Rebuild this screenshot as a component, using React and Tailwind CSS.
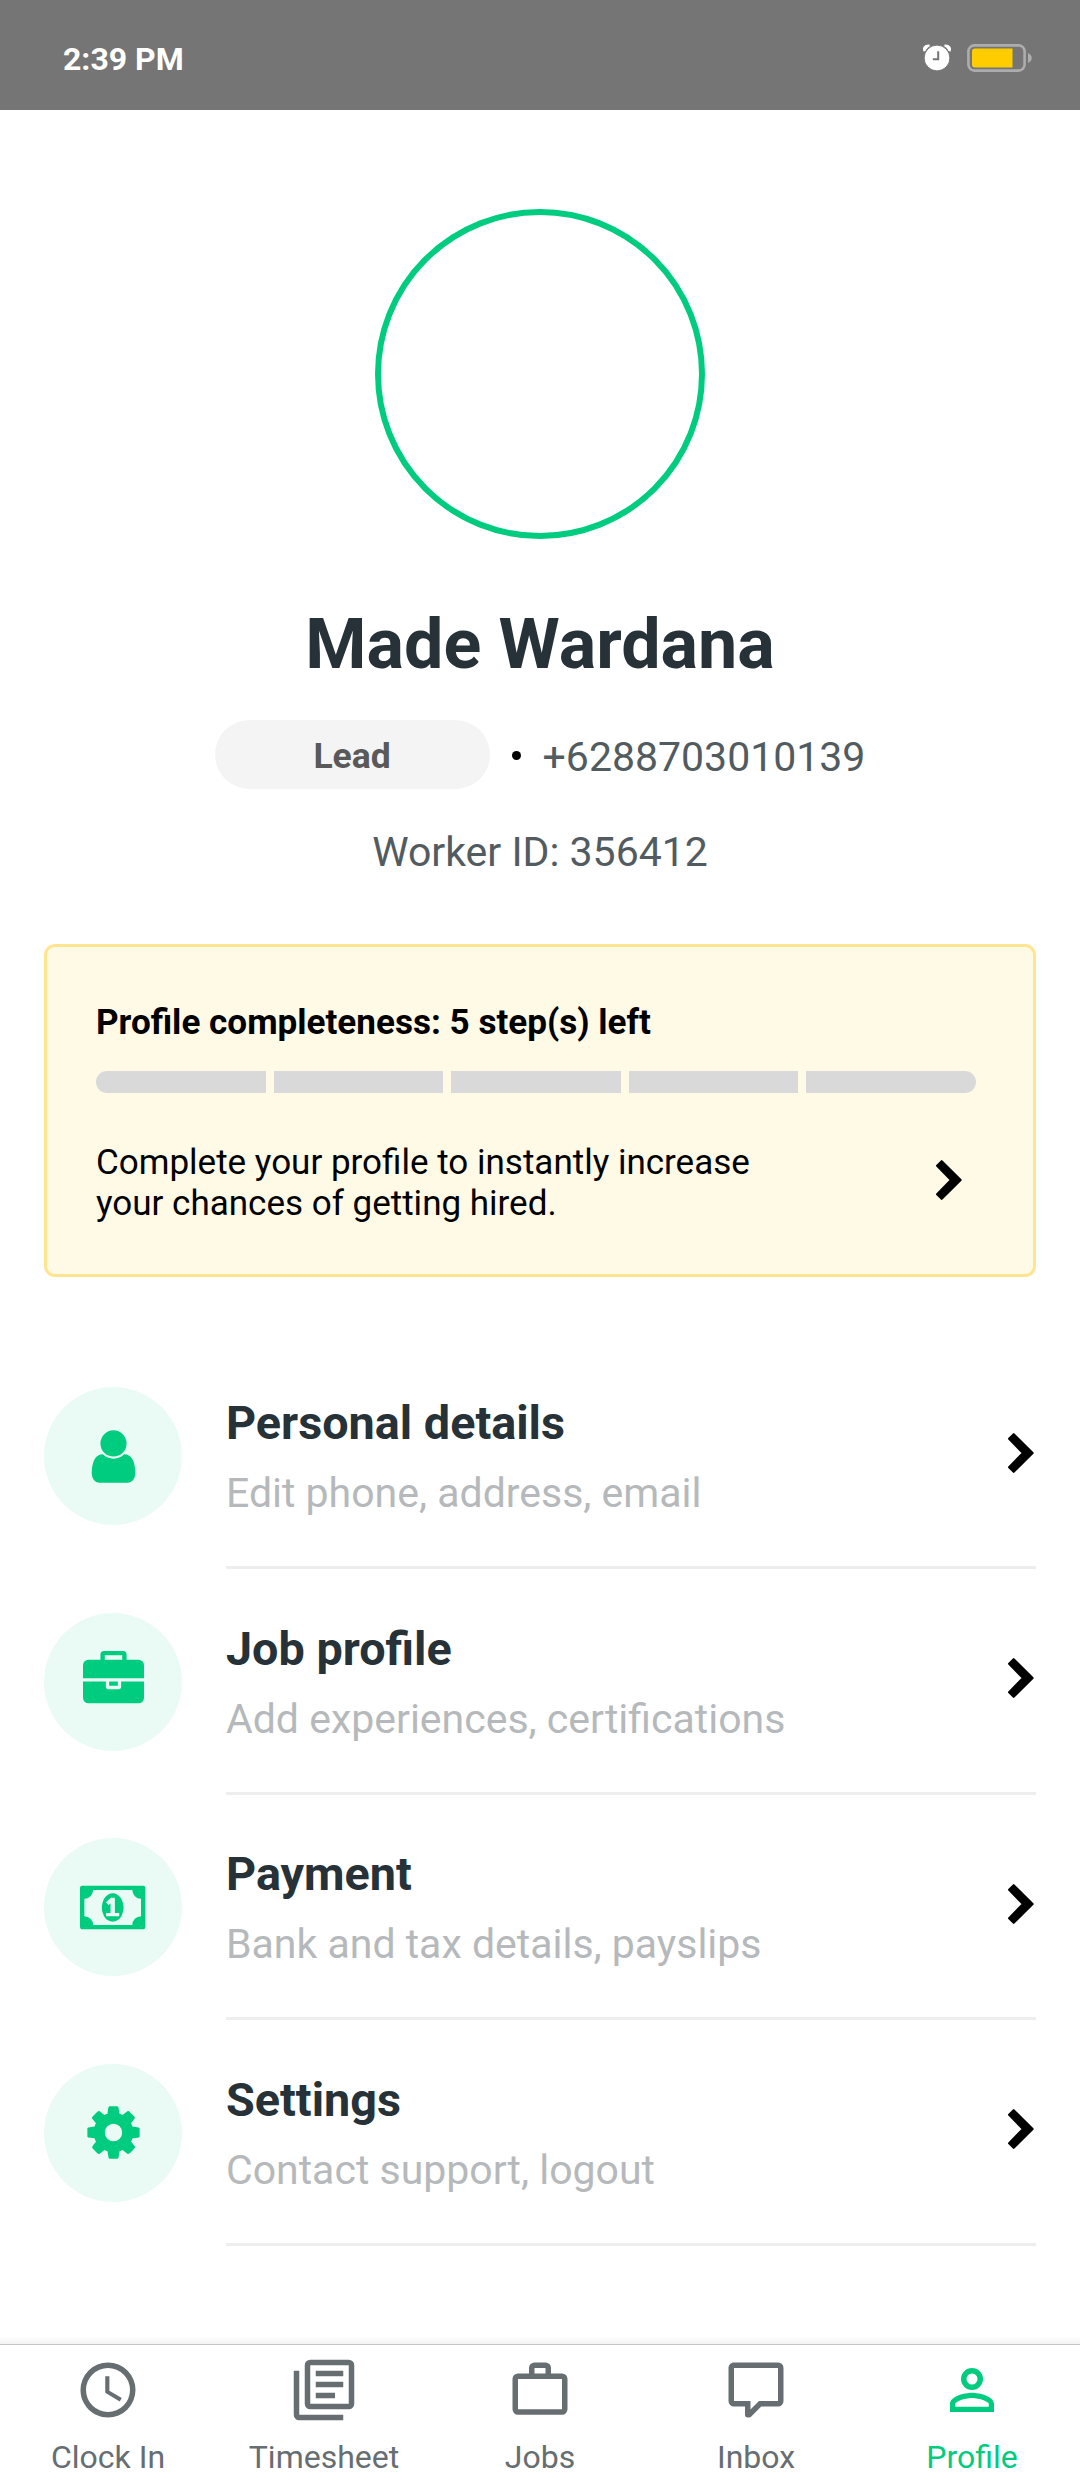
import React from "react";

const ICONS = {
  user: {
    d: "M1536 1399q0 109-62.5 187t-150.5 78h-854q-88 0-150.5-78t-62.5-187q0-85 8.5-160.5t31.5-152 58.5-131 94-89 134.5-34.5q131 128 313 128t313-128q76 0 134.5 34.5t94 89 58.5 131 31.5 152 8.5 160.5zm-256-887q0 159-112.5 271.5t-271.5 112.5-271.5-112.5-112.5-271.5 112.5-271.5 271.5-112.5 271.5 112.5 112.5 271.5z",
  },
  briefcase: {
    d: "M640 256h512v-128h-512v128zm1152 640v480q0 66-47 113t-113 47h-1472q-66 0-113-47t-47-113v-480h672v160q0 26 19 45t45 19h320q26 0 45-19t19-45v-160h672zm-768 0v128h-256v-128h256zm768-480v384h-1792v-384q0-66 47-113t113-47h352v-160q0-40 28-68t68-28h576q40 0 68 28t28 68v160h352q66 0 113 47t47 113z",
  },
  money: {
    d: "M768 1152h384v-96h-128v-448h-114l-148 137 77 80q42-37 55-57h2v288h-128v96zm512-256q0 70-21 142t-59.5 134-101.5 101-138 39-138-39-101.5-101-59.5-134-21-142 21-142 59.5-134 101.5-101 138-39 138 39 101.5 101 59.5 134 21 142zm512 256v-512q-106 0-181-75t-75-181h-1152q0 106-75 181t-181 75v512q106 0 181 75t75 181h1152q0-106 75-181t181-75zm128-832v1152q0 26-19 45t-45 19h-1792q-26 0-45-19t-19-45v-1152q0-26 19-45t45-19h1792q26 0 45 19t19 45z",
  },
  cog: {
    d: "M1152 896q0-106-75-181t-181-75-181 75-75 181 75 181 181 75 181-75 75-181zm512-109v222q0 12-8 23t-20 13l-185 28q-19 54-39 91 35 50 107 138 10 12 10 25t-9 23q-27 37-99 108t-94 71q-12 0-26-9l-138-108q-44 23-91 38-16 136-29 186-7 28-36 28h-222q-14 0-24.5-8.5t-11.5-21.5l-28-184q-49-16-90-37l-141 107q-10 9-25 9-14 0-25-11-126-114-165-168-7-10-7-23 0-12 8-23 15-21 51-66.5t54-70.5q-27-50-41-99l-183-27q-13-2-21-12.5t-8-23.5v-222q0-12 8-23t19-13l186-28q14-46 39-92-40-57-107-138-10-12-10-24 0-10 9-23 26-36 98.5-107.5t94.5-71.5q13 0 26 10l138 107q44-23 91-38 16-136 29-186 7-28 36-28h222q14 0 24.5 8.5t11.5 21.5l28 184q49 16 90 37l142-107q9-9 24-9 13 0 25 10 129 119 165 170 7 8 7 22 0 12-8 23-15 21-51 66.5t-54 70.5q26 50 41 98l183 28q13 2 21 12.5t8 23.5z",
  },
};

const MENU = [
  { icon: "user", title: "Personal details", sub: "Edit phone, address, email" },
  { icon: "briefcase", title: "Job profile", sub: "Add experiences, certifications" },
  { icon: "money", title: "Payment", sub: "Bank and tax details, payslips" },
  { icon: "cog", title: "Settings", sub: "Contact support, logout" },
];

const TABS = [
  {
    label: "Clock In",
    d: "M12,20A8,8 0 0,0 20,12A8,8 0 0,0 12,4A8,8 0 0,0 4,12A8,8 0 0,0 12,20M12,2A10,10 0 0,1 22,12A10,10 0 0,1 12,22C6.47,22 2,17.5 2,12A10,10 0 0,1 12,2M12.5,7V12.25L17,14.92L16.25,16.15L11,13V7H12.5Z",
  },
  {
    label: "Timesheet",
    d: "M19 7H9V5h10zM16 15H9v-2h7zM19 11H9V9h10zM7 17h14V3H7zM21 1a2 2 0 0 1 2 2v14a2 2 0 0 1-2 2H7a2 2 0 0 1-2-2V3a2 2 0 0 1 2-2zM3 5v16h16v2H3a2 2 0 0 1-2-2V5z",
  },
  {
    label: "Jobs",
    d: "M10 2h4a2 2 0 0 1 2 2v2h4a2 2 0 0 1 2 2v11a2 2 0 0 1-2 2H4a2 2 0 0 1-2-2V8a2 2 0 0 1 2-2h4V4a2 2 0 0 1 2-2zM4 8v11h16V8zM10 4v2h4V4z",
  },
  {
    label: "Inbox",
    d: "M9,22A1,1 0 0,1 8,21V18H4A2,2 0 0,1 2,16V4C2,2.89 2.9,2 4,2H20A2,2 0 0,1 22,4V16A2,2 0 0,1 20,18H13.9L10.2,21.71C10,21.9 9.75,22 9.5,22V22H9M10,16V19.08L13.08,16H20V4H4V16H10Z",
  },
  {
    label: "Profile",
    active: true,
    d: "M12,4A4,4 0 0,1 16,8A4,4 0 0,1 12,12A4,4 0 0,1 8,8A4,4 0 0,1 12,4M12,6A2,2 0 0,0 10,8A2,2 0 0,0 12,10A2,2 0 0,0 14,8A2,2 0 0,0 12,6M12,13C14.67,13 20,14.33 20,17V20H4V17C4,14.33 9.33,13 12,13M12,14.9C9.03,14.9 5.9,16.36 5.9,17V18.1H18.1V17C18.1,16.36 14.97,14.9 12,14.9Z",
  },
];

function Chevron() {
  return (
    <svg width="26" height="40" viewBox="0 0 26 40" className="block shrink-0">
      <path
        d="M5.7 1.2 24.6 20 5.7 38.8 1.1 34.2 15 20 1.1 5.8z"
        stroke="#000"
        strokeWidth="2.2"
        strokeLinejoin="round"
      />
    </svg>
  );
}

function StatusBar() {
  return (
    <div className="flex h-[110px] items-center justify-between bg-[#757575] pr-[47px] pl-[63px]">
      <span className="pt-[7px] text-[32px] leading-[40px] font-bold text-white">2:39 PM</span>
      <div className="flex items-center gap-[16px] pt-[5px]">
        <svg width="28" height="27" viewBox="0 0 28 27">
          <path d="M1.8 7.2C.2 4.4 1.8 1.3 6.5 1.7" stroke="#fff" strokeWidth="2.4" fill="#fff" />
          <path d="M26.2 7.2c1.6-2.8 0-5.9-4.7-5.5" stroke="#fff" strokeWidth="2.4" fill="#fff" />
          <circle cx="14" cy="14" r="12.9" fill="#fff" stroke="#757575" strokeWidth="1" />
          <path d="M15.2 7.2v8H9.8" stroke="#757575" strokeWidth="2" fill="none" />
        </svg>
        <svg width="66" height="28" viewBox="0 0 66 28">
          <rect x="1.4" y="1.4" width="56.2" height="25.2" rx="6" fill="none" stroke="#adadad" strokeWidth="2.6" />
          <path d="M8 4.5H45.5V23.5H8a3 3 0 0 1-3-3V7.5a3 3 0 0 1 3-3z" fill="#ffcc00" />
          <path d="M61 9c5 2 5 8 0 10z" fill="#adadad" />
        </svg>
      </div>
    </div>
  );
}

export default function App() {
  return (
    <div className="flex h-[2481px] w-[1080px] flex-col overflow-hidden bg-white font-['Roboto',sans-serif]">
      <StatusBar />

      <section className="flex flex-col items-center">
        <div className="mt-[99px] size-[330px] rounded-full border-[6px] border-[#00cc80]" />
        <h1 className="mt-[63px] text-[70px] leading-[84px] font-bold text-[#263238]">Made Wardana</h1>
        <div className="mt-[34px] flex h-[69px] items-center">
          <div className="flex h-[69px] w-[275px] items-center justify-center rounded-full bg-[#f4f4f4] pt-[2px] text-[35.5px] leading-[42px] font-bold text-[#595959]">
            Lead
          </div>
          <span className="mt-[2px] ml-[22px] size-[9px] rounded-full bg-black" />
          <span className="ml-[22px] pt-[5px] text-[41px] leading-[48px] text-[#515b60]">+6288703010139</span>
        </div>
        <p className="mt-[39px] text-[41px] leading-[48px] text-[#515b60]">Worker ID: 356412</p>
      </section>

      <section className="mx-[44px] mt-[68px] h-[333px] shrink-0 rounded-[11px] border-[3px] border-[#ffe58f] bg-[#fffae6] pt-[54px] pr-[57px] pl-[49px] text-[35px] text-black">
        <h2 className="text-[35.1px] leading-[42px] font-bold">Profile completeness: 5 step(s) left</h2>
        <div className="mt-[28px] flex h-[22px] gap-[8px] overflow-hidden rounded-full">
          {[0, 1, 2, 3, 4].map((i) => (
            <div key={i} className="flex-1 bg-[#d9d9d9]" />
          ))}
        </div>
        <div className="mt-[49px] flex items-start justify-between pr-[14px]">
          <p className="leading-[41px]">
            Complete your profile to instantly increase
            <br />
            your chances of getting hired.
          </p>
          <div className="mt-[18px]">
            <Chevron />
          </div>
        </div>
      </section>

      <nav className="mt-[110px] px-[44px]">
        {MENU.map((m) => (
          <div key={m.title} className="flex h-[225.6px] gap-[44px]">
            <div className="flex size-[138px] shrink-0 items-center justify-center rounded-full bg-[#eafbf6]">
              <svg
                viewBox={m.icon === "money" ? "0 0 1920 1792" : "0 0 1792 1792"}
                className={m.icon === "money" ? "h-[61px] w-[65.4px]" : "size-[61px]"}
              >
                <path d={ICONS[m.icon].d} fill="#00cc80" />
              </svg>
            </div>
            <div className="flex h-[182px] flex-1 flex-col justify-between">
              <div className="flex justify-between pr-[2px]">
                <div className="pt-[8px]">
                  <h3 className="text-[46.75px] leading-[56px] font-bold text-[#263238]">{m.title}</h3>
                  <p className="mt-[18px] text-[41px] leading-[48px] text-[#b6b9bb]">{m.sub}</p>
                </div>
                <div className="pt-[45.5px]">
                  <Chevron />
                </div>
              </div>
              <div className="h-[3px] bg-[#eeeeee]" />
            </div>
          </div>
        ))}
      </nav>

      <footer className="mt-auto shrink-0">
        <div className="h-[8px] bg-gradient-to-b from-white to-[#f3f3f3]" />
        <div className="flex h-[137px] border-t border-[#c6c6c6] bg-white pt-[12px]">
          {TABS.map((t) => (
            <div
              key={t.label}
              className={
                t.active
                  ? "flex flex-1 flex-col items-center text-[#00cc80]"
                  : "flex flex-1 flex-col items-center text-[#666e72]"
              }
            >
              <svg viewBox="0 0 24 24" className="size-[66px]">
                <path d={t.d} fill="currentColor" fillRule="evenodd" />
              </svg>
              <span className="mt-[14px] text-[32px] leading-[40px]">{t.label}</span>
            </div>
          ))}
        </div>
      </footer>
    </div>
  );
}
